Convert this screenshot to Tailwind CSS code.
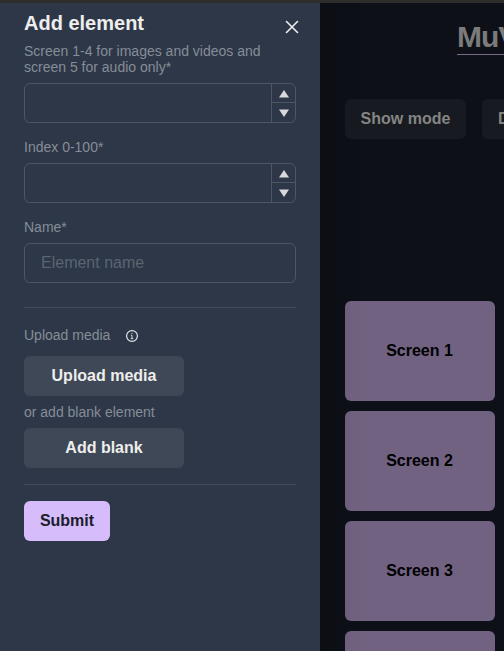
<!DOCTYPE html>
<html lang="en">
<head>
<meta charset="utf-8">
<title>Add element</title>
<script src="https://cdn.jsdelivr.net/npm/@tailwindcss/browser@4"></script>
</head>
<body class="h-[651px] w-[504px] overflow-hidden bg-[#0d1017] font-['Liberation_Sans',Arial,sans-serif]">
<div class="flex h-full flex-col overflow-hidden">
  <div class="relative z-20 h-[3px] w-full shrink-0 bg-[#2d2d2c]"></div>
  <div class="flex min-h-0 flex-1">
    <aside class="z-10 w-80 shrink-0 bg-[#2d3748] px-6 text-sm leading-4 text-[#868d97] shadow-[0_0_24px_4px_rgba(12,13,14,0.8)]">
      <header class="flex h-10 items-start justify-between">
        <h1 class="pt-2 text-xl leading-6 font-bold text-[#eeeeec]">Add element</h1>
        <button class="mt-[17px] -mr-[3px] size-[14px]" aria-label="Close">
          <svg class="block size-[14px]" viewBox="0 0 14 14" fill="none" stroke="#eeeeec" stroke-width="1.6" stroke-linecap="round"><path d="M1.5 1.5 12.5 12.5M12.5 1.5 1.5 12.5"/></svg>
        </button>
      </header>
      <form>
        <label class="block">Screen 1-4 for images and videos and<br>screen 5 for audio only*</label>
        <div class="mt-2 flex h-10 rounded-md border border-[#4d5665]">
          <div class="flex-1"></div>
          <div class="flex w-6 flex-col border-l border-[#4d5665]">
            <div class="flex h-[19px] border-b border-[#4d5665] pt-[6px] pl-[7px]"><svg class="h-2 w-[10px]" viewBox="0 0 10 8" fill="#d8d9da"><path d="M5 0 10 7.6H0Z"/></svg></div>
            <div class="flex flex-1 pt-[6px] pl-[7px]"><svg class="h-2 w-[10px]" viewBox="0 0 10 8" fill="#d8d9da"><path d="M0 .4H10L5 8Z"/></svg></div>
          </div>
        </div>
        <label class="mt-4 block">Index 0-100*</label>
        <div class="mt-2 flex h-10 rounded-md border border-[#4d5665]">
          <div class="flex-1"></div>
          <div class="flex w-6 flex-col border-l border-[#4d5665]">
            <div class="flex h-[19px] border-b border-[#4d5665] pt-[6px] pl-[7px]"><svg class="h-2 w-[10px]" viewBox="0 0 10 8" fill="#d8d9da"><path d="M5 0 10 7.6H0Z"/></svg></div>
            <div class="flex flex-1 pt-[6px] pl-[7px]"><svg class="h-2 w-[10px]" viewBox="0 0 10 8" fill="#d8d9da"><path d="M0 .4H10L5 8Z"/></svg></div>
          </div>
        </div>
        <label class="mt-4 block">Name*</label>
        <div class="mt-2 flex h-10 items-center rounded-md border border-[#4d5665] px-4 text-base text-[#5b6471]">Element name</div>
        <div class="mt-6 h-px bg-[#424c5b]"></div>
        <div class="mt-[18px] flex h-[18px] items-center"><span>Upload media</span><svg class="mt-[2px] ml-4 size-3" viewBox="0 0 12 12" fill="none" stroke="#e4e6e8"><circle cx="6" cy="6" r="5.4" stroke-width="1.2"/><path d="M4.9 5.4H6V8.6M4.7 8.6H7.3M6 3V4.1" stroke-width="0.9"/></svg></div>
        <div class="mt-3 flex h-10 w-40 items-center justify-center rounded-md bg-[#3f4856] text-base font-bold text-[#eeeeec]">Upload media</div>
        <div class="my-2">or add blank element</div>
        <div class="flex h-10 w-40 items-center justify-center rounded-md bg-[#3f4856] text-base font-bold text-[#eeeeec]">Add blank</div>
        <div class="mt-4 h-px bg-[#424c5b]"></div>
        <div class="mt-4 flex h-10 w-[86px] items-center justify-center rounded-md bg-[#d6bcfa] text-base font-bold text-[#1a202c]">Submit</div>
      </form>
    </aside>
    <main class="w-[520px] shrink-0 pl-[25px] text-base font-bold">
      <div class="flex h-24 pl-28"><h2 class="mt-4 h-9 border-b border-[#78688a] text-[30px] leading-9 tracking-[-1px] text-[#7b7b7b]">MuViCo</h2></div>
      <div class="flex gap-4 text-[#858583]">
        <div class="flex h-10 w-[121px] items-center justify-center rounded-md bg-[#171a20]">Show mode</div>
        <div class="flex h-10 w-32 items-center rounded-md bg-[#171a20] pl-4">Delete</div>
      </div>
      <div class="mt-[162px] flex flex-col gap-[10px] text-black">
        <div class="flex h-[100px] w-[150px] items-center justify-center rounded-md bg-[#716281] pr-px">Screen 1</div>
        <div class="flex h-[100px] w-[150px] items-center justify-center rounded-md bg-[#716281] pr-px">Screen 2</div>
        <div class="flex h-[100px] w-[150px] items-center justify-center rounded-md bg-[#716281] pr-px">Screen 3</div>
        <div class="h-[100px] w-[150px] rounded-md bg-[#716281]"></div>
      </div>
    </main>
  </div>
</div>
</body>
</html>
